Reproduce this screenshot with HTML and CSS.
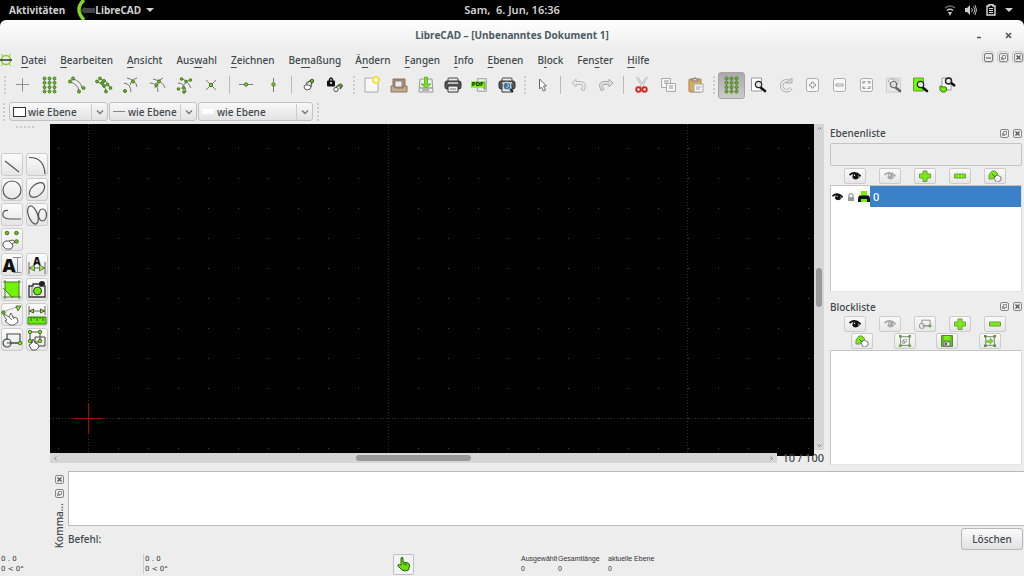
FILE: index.html
```html
<!DOCTYPE html>
<html lang="de">
<head>
<meta charset="utf-8">
<title>LibreCAD – [Unbenanntes Dokument 1]</title>
<link rel="stylesheet" href="styles.css">
</head>
<body>
<svg class="sprite" aria-hidden="true">
  <defs>
    <symbol id="grid" viewBox="0 0 18 18"><path d="M3.500 2v14M8.500 2v14M13.500 2v14" stroke="#9a9a9a" stroke-width="1"/><g fill="#73b832" stroke="#3f7a12" stroke-width=".9"><circle cx="3.500" cy="2.500" r="1.500"/><circle cx="8.500" cy="2.500" r="1.500"/><circle cx="13.500" cy="2.500" r="1.500"/><circle cx="3.500" cy="6.800" r="1.500"/><circle cx="8.500" cy="6.800" r="1.500"/><circle cx="13.500" cy="6.800" r="1.500"/><circle cx="3.500" cy="11.200" r="1.500"/><circle cx="8.500" cy="11.200" r="1.500"/><circle cx="13.500" cy="11.200" r="1.500"/><circle cx="3.500" cy="15.500" r="1.500"/><circle cx="8.500" cy="15.500" r="1.500"/><circle cx="13.500" cy="15.500" r="1.500"/></g></symbol>
    <symbol id="eye" viewBox="0 0 14 10"><path d="M2 3.500Q7 0 12.500 5 8 10 4.500 6.500" fill="#fff" stroke="currentColor" stroke-width=".8"/><path d="M1.500 4Q7-.5 12.500 5" fill="none" stroke="currentColor" stroke-width="1.700"/><circle cx="7.500" cy="5.200" r="3" fill="currentColor"/><circle cx="6.500" cy="4.300" r=".7" fill="#fff"/></symbol>
    <symbol id="plus" viewBox="0 0 12 12"><path d="M4 1h4v3h3.500v4H8v3.500H4V8H.5V4H4Z" fill="#7aec0c" stroke="#6c9c4a"/></symbol>
    <symbol id="minus" viewBox="0 0 12 12"><path d="M.5 4h11v4H.5Z" fill="#7aec0c" stroke="#6c9c4a"/></symbol>
    <symbol id="edit" viewBox="0 0 14 12"><path d="M1 9V5l3-4h3l3 3-3 2-2 3Z" fill="#7aec0c" stroke="#6d9950"/><path d="M4 4l4 4" stroke="#397012"/><path d="M6 8l3-3 4 2v3l-3 2H8Z" fill="#fff" stroke="#777"/></symbol>
    <symbol id="lens" viewBox="0 0 18 18"><path d="M11 11l5 4" stroke="#111" stroke-width="2.600" stroke-linecap="round"/><circle cx="9.500" cy="8.500" r="3.200" fill="#dce5e8" stroke="#222" stroke-width="1.200"/></symbol>
    <symbol id="float" viewBox="0 0 9 9"><rect x=".5" y=".5" width="8" height="8" rx="1.500" fill="none" stroke="#888"/><path d="M3.500 2.500h3v3h-3ZM2.500 4v2.500H5" fill="none" stroke="#777" stroke-width=".8"/></symbol>
    <symbol id="close" viewBox="0 0 9 9"><rect x=".5" y=".5" width="8" height="8" rx="1.500" fill="none" stroke="#888"/><path d="M2.500 2.500l4 4M6.500 2.500l-4 4" stroke="#555" stroke-width="1.300"/></symbol>
    <symbol id="chevron" viewBox="0 0 8 8"><path d="M1 2.500l3 3 3-3" fill="none" stroke="#777" stroke-width="1.400"/></symbol>
    <symbol id="printer" viewBox="0 0 18 18"><rect x="4" y="2" width="10" height="5" rx="1" fill="#eee" stroke="#444"/><rect x="1" y="5" width="16" height="8" rx="2" fill="#555" stroke="#333"/><path d="M4 7h10" stroke="#ddd" stroke-width="1.500"/><path d="M4 10h10v6H4Z" fill="#eee" stroke="#333"/><path d="M6 13h6" stroke="#777"/></symbol>
    <symbol id="hand" viewBox="0 0 16 16"><path d="M5 9V2q1-1.500 2 0v4l5 1q2 1 1.500 3l-1 4q-3.500 2-6.500 0L2 10q-.5-2 1.500-1.500Z" stroke="currentColor"/><path d="M8 7v2M10 7.500v2" stroke="currentColor"/></symbol>
    <symbol id="block" viewBox="0 0 22 16"><path d="M6 8V2h13v9h-9" fill="none" stroke="currentColor" stroke-width="1.200"/><circle cx="6" cy="11" r="4" fill="none" stroke="currentColor" stroke-width="1.200"/><path d="M6 11h13" stroke="currentColor"/><circle cx="19" cy="11" r="1.800" fill="#7aec0c" stroke="#477c1d"/></symbol>
    <pattern id="points" x="-7" y="10" width="30" height="30" patternUnits="userSpaceOnUse"><rect x="15" y="14" width="1" height="1" fill="#444"/></pattern>
  </defs>
</svg>

<header class="topbar">
  <div class="topbar-left">
    <a href="#" class="activities">Aktivitäten</a>
    <svg class="app-mark" viewBox="0 0 18 20" aria-hidden="true"><path d="M7 0Q-3 9 7 20" fill="none" stroke="#83d81c" stroke-width="3.500"/><path d="M3 10l5-3v1h10v5H8v1Z" fill="#444"/></svg>
    <button class="app-menu">LibreCAD<span class="caret"></span></button>
  </div>
  <time class="clock" datetime="16:36">Sam,&nbsp; 6. Jun, 16:36</time>
  <div class="tray">
    <svg width="12" height="12" viewBox="0 0 12 12" role="img" aria-label="WLAN"><g fill="none" stroke="#ccc" stroke-width="1.500"><path d="M1 4q5-4 10 0" opacity=".5"/><path d="M3 6.500q3-2.500 6 0"/></g><path d="M4 8h4l-2 4Z" fill="#ccc"/></svg>
    <svg width="12" height="12" viewBox="0 0 12 12" role="img" aria-label="Lautstärke"><path d="M0 4h2l3-3v10L2 8H0Z" fill="#ccc"/><path d="M6.500 4q2 2 0 4M8.500 2.500q3 3.500 0 7M10 1q3 5 0 10" fill="none" stroke="#bbb"/></svg>
    <svg width="10" height="12" viewBox="0 0 10 12" role="img" aria-label="Akku"><path d="M1 2h2V.7h4V2h2v9H1Z" fill="none" stroke="#ddd" stroke-width="1.400"/><path d="M3 4.500h4M3 6.500h4M3 8.500h4" stroke="#ddd"/></svg>
    <span class="caret"></span>
  </div>
</header>

<div class="window">
  <div class="titlebar">
    <h1>LibreCAD – [Unbenanntes Dokument 1]</h1>
    <div class="window-buttons">
      <button aria-label="Minimieren"><svg width="7" height="7" viewBox="0 0 7 7"><path d="M1 5.500h4" stroke="#4b5960" stroke-width="1.500"/></svg></button>
      <button aria-label="Schließen"><svg width="7" height="7" viewBox="0 0 7 7"><path d="M1 1l5 5M6 1L1 6" stroke="#4b5960" stroke-width="1.700"/></svg></button>
    </div>
  </div>

  <div class="menubar">
    <svg class="doc-icon" viewBox="0 0 13 14" aria-hidden="true"><circle cx="6" cy="7" r="4.500" fill="none" stroke="#8acb38" stroke-width="1.600"/><path d="M1 1l2 2M11 1L9 3M1 13l2-2M11 13l-2-2" stroke="#8acb38"/><path d="M0 7h12" stroke="#333" stroke-width="1.500"/></svg>
    <nav class="menu">
      <a href="#"><u>D</u>atei</a><a href="#"><u>B</u>earbeiten</a><a href="#"><u>A</u>nsicht</a><a href="#">Aus<u>w</u>ahl</a><a href="#"><u>Z</u>eichnen</a><a href="#">Be<u>m</u>aßung</a><a href="#">Ä<u>n</u>dern</a><a href="#"><u>F</u>angen</a><a href="#"><u>I</u>nfo</a><a href="#"><u>E</u>benen</a><a href="#">B<u>l</u>ock</a><a href="#">Fen<u>s</u>ter</a><a href="#"><u>H</u>ilfe</a>
    </nav>
    <div class="doc-buttons">
      <button aria-label="Dokument minimieren"><svg viewBox="0 0 9 9"><rect x=".5" y=".5" width="8" height="8" rx="1.500" fill="none" stroke="#777"/><path d="M2 5h5" stroke="#555"/></svg></button>
      <button aria-label="Dokument wiederherstellen"><svg><use href="#float"/></svg></button>
      <button aria-label="Dokument schließen"><svg><use href="#close"/></svg></button>
    </div>
  </div>

  <div class="toolbars">
    <div class="toolbar snap">
      <span class="grip"></span>
      <button aria-label="Freies Fangen"><svg viewBox="0 0 18 18"><path d="M8.500 2.500v13M2 8.500h13" stroke="#909090"/></svg></button>
      <button aria-label="Rasterfang"><svg><use href="#grid"/></svg></button>
      <button aria-label="Endpunkte"><svg viewBox="0 0 18 18"><path d="M2 6Q10 8 11 15M5 3q8 2 9 9" fill="none" stroke="#777"/><g fill="#73b832" stroke="#3f7a12"><circle cx="2" cy="5.500" r="1.500"/><circle cx="5" cy="2.500" r="1.500"/><circle cx="11" cy="15.500" r="1.500"/><circle cx="15.500" cy="12" r="1.500"/></g></svg></button>
      <button aria-label="Auf Objekt"><svg viewBox="0 0 18 18"><path d="M2 6Q10 8 11 15M5 3q8 2 10 9" fill="none" stroke="#777"/><g fill="#73b832" stroke="#3f7a12"><circle cx="2" cy="5.500" r="1.400"/><circle cx="5" cy="2.500" r="1.400"/><circle cx="7" cy="7" r="1.400"/><circle cx="9" cy="5" r="1.400"/><circle cx="9" cy="10" r="1.400"/><circle cx="12.500" cy="8.500" r="1.400"/><circle cx="11" cy="15.500" r="1.400"/><circle cx="15.500" cy="12" r="1.400"/></g></svg></button>
      <button aria-label="Zentrum"><svg viewBox="0 0 18 18"><path d="M2 7Q9 8 9 16M5 2q9 2 10 9M15 2q-6 2-7 7" fill="none" stroke="#777"/><g fill="#73b832" stroke="#3f7a12"><circle cx="11" cy="5.500" r="1.500"/><circle cx="3" cy="15" r="1.500"/></g></svg></button>
      <button aria-label="Mittelpunkt"><svg viewBox="0 0 18 18"><path d="M1 7q8 0 8 9M4 3q10 2 12 9M14 2Q6 6 6 12" fill="none" stroke="#777"/><g fill="#73b832" stroke="#3f7a12"><circle cx="10" cy="5.500" r="1.500"/><circle cx="7.500" cy="9" r="1.500"/></g></svg></button>
      <button aria-label="Abstand"><svg viewBox="0 0 18 18"><path d="M2 7q7 0 8 9M7 3q5 2 8 9M14 4q-6 2-8 9" fill="none" stroke="#777"/><g fill="#73b832" stroke="#3f7a12"><circle cx="5.500" cy="3" r="1.300"/><circle cx="10" cy="5.500" r="1.300"/><circle cx="14.500" cy="4" r="1.300"/><circle cx="2.500" cy="13" r="1.300"/><circle cx="7.500" cy="12" r="1.300"/><circle cx="8" cy="16" r="1.300"/></g></svg></button>
      <button aria-label="Schnittpunkt"><svg viewBox="0 0 18 18"><path d="M3 4l10 10M13 4L3 14" stroke="#777"/><circle cx="8" cy="9" r="1.700" fill="#8bcb40" stroke="#3f7a12"/></svg></button>
      <span class="sep"></span>
      <button aria-label="Horizontal einschränken"><svg viewBox="0 0 18 18"><path d="M1 8.500h14" stroke="#777"/><circle cx="8" cy="8.500" r="1.700" fill="#8bcb40" stroke="#3f7a12"/></svg></button>
      <button aria-label="Vertikal einschränken"><svg viewBox="0 0 18 18"><path d="M8.500 2v14" stroke="#777"/><circle cx="8.500" cy="8.500" r="1.700" fill="#8bcb40" stroke="#3f7a12"/></svg></button>
      <span class="sep"></span>
      <button aria-label="Relativer Nullpunkt"><svg viewBox="0 0 18 18"><path d="M6 8l2-2 4-2M12 5l-1 6" fill="none" stroke="#666" stroke-width="1.500"/><circle cx="12" cy="5" r="1.700" fill="#73b832" stroke="#345e12"/><path d="M5 9h4l2 2-1 2-3 1-2-1-1-2Z" fill="#fff" stroke="#555"/></svg></button>
      <button aria-label="Nullpunkt sperren"><svg viewBox="0 0 18 18"><path d="M2.500 5V3.500q1.500-3 3 0V5" fill="none" stroke="#111" stroke-width="1.500"/><rect x="0" y="4.500" width="8" height="6" rx="1" fill="#111"/><circle cx="4" cy="7" r="1" fill="#fff"/><path d="M9 11l3-2 3 1-2 3" fill="none" stroke="#555" stroke-width="1.500"/><circle cx="13.500" cy="9.500" r="1.600" fill="#73b832" stroke="#345e12"/><circle cx="9" cy="13.500" r="2.200" fill="#fff" stroke="#555"/></svg></button>
    </div>
    <div class="toolbar">
      <span class="grip"></span>
      <button aria-label="Neu"><svg viewBox="0 0 18 18"><path d="M2 2h13v14H2Z" fill="#f7f7f7" stroke="#aaa"/><circle cx="13" cy="4" r="3" fill="#fffce0" stroke="#f2df45" stroke-width="2"/></svg></button>
      <button aria-label="Öffnen"><svg viewBox="0 0 18 18"><path d="M3 3h12v10H3Z" fill="#ab8c6c" stroke="#8c7158"/><path d="M5 5h7v6H5Z" fill="#eee" stroke="#888"/><path d="M1 10h3l1 2h8l1-2h3v6H1Z" fill="#c4ab90" stroke="#8e7660"/></svg></button>
      <button aria-label="Speichern"><svg viewBox="0 0 18 18"><path d="M3 3h12l1 13H2Z" fill="#eee" stroke="#999"/><path d="M3 12h12M5 14h7" stroke="#777"/><path d="M7.500 1h3v7H14l-5 4-5-4h3.500Z" fill="#75e51b" stroke="#579d25" stroke-width=".7"/></svg></button>
      <button aria-label="Drucken"><svg><use href="#printer"/></svg></button>
      <button aria-label="PDF exportieren"><svg class="pdf" viewBox="0 0 20 18"><path d="M7 2h10v14H7Z" fill="#e8e8e8" stroke="#999"/><path d="M14 5h2v9h-2Z" fill="#5ca92d"/><path d="M0 5h15v7H0Z" fill="#78ed0e"/><text x="7.500" y="10.500" text-anchor="middle">PDF</text></svg></button>
      <button aria-label="Druckvorschau"><svg viewBox="0 0 18 18"><use href="#printer"/><circle cx="9" cy="10" r="4" fill="#3a76a5" stroke="#ddd"/><path d="M9 7l2 3-3 2" fill="none" stroke="#a7d0ea"/><path d="M12 13l3 3" stroke="#222" stroke-width="2"/></svg></button>
    </div>
    <div class="toolbar">
      <span class="grip"></span>
      <button aria-label="Auswahlzeiger"><svg viewBox="0 0 18 18"><path d="M5.500 3v10l2-2 2 4 2-1-2-4h3Z" fill="#fff" stroke="#666"/></svg></button>
      <span class="sep"></span>
      <button aria-label="Rückgängig" disabled><svg viewBox="0 0 18 18"><path d="M6 3L2 7l4 4V8.500h5q3 1 0 5l3 1q4-8-3-9H6Z" fill="#e9e9e9" stroke="#b7b7b7"/></svg></button>
      <button aria-label="Wiederholen" disabled><svg viewBox="0 0 18 18"><path d="M12 3l4 4-4 4V8.500H7q-3 1 0 5l-3 1Q0 6 7 5.500h5Z" fill="#dedede" stroke="#aaa"/></svg></button>
      <span class="sep"></span>
      <button aria-label="Ausschneiden"><svg viewBox="0 0 18 18"><path d="M4 1l7 11M14 1L7 12" stroke="#aaa" stroke-width="2.200"/><path d="M4 1l7 11M14 1L7 12" stroke="#eee"/><g fill="#fff" stroke="#d92525" stroke-width="2"><circle cx="5.500" cy="13.500" r="2.200"/><circle cx="11.500" cy="13.500" r="2.200"/></g></svg></button>
      <button aria-label="Kopieren"><svg viewBox="0 0 18 18"><path d="M1.500 2.500h9v9h-9Z" fill="#f5f5f5" stroke="#aaa"/><path d="M6.500 7.500h9v8h-9Z" fill="#f5f5f5" stroke="#aaa"/><path d="M4 5h5M4 7h4M9 10h4M9 12h4" stroke="#999"/></svg></button>
      <button aria-label="Einfügen"><svg viewBox="0 0 18 18"><rect x="2" y="3" width="12" height="13" rx="1" fill="#d6aa61" stroke="#aa8143"/><path d="M5 5V3h2q1-3 2 0h2v2Z" fill="#ddd" stroke="#777"/><path d="M7 8h9v8H7Z" fill="#f2f2f2" stroke="#aaa"/><path d="M9 11h5M9 13h4" stroke="#aaa"/></svg></button>
    </div>
    <div class="toolbar">
      <span class="grip"></span>
      <button class="pressed" aria-label="Raster" aria-pressed="true"><svg><use href="#grid"/></svg></button>
      <button aria-label="Neu zeichnen"><svg viewBox="0 0 18 18"><path d="M1.500 2h10v13h-10Z" fill="#fff" stroke="#999"/><use href="#lens" x="-1"/></svg></button>
      <button aria-label="Ansicht erneuern"><svg viewBox="0 0 18 18"><path d="M13 6A5 5 0 1 0 14 12" fill="none" stroke="#aaa" stroke-width="3.500"/><path d="M13 6A5 5 0 1 0 14 12" fill="none" stroke="#eee" stroke-width="1.800"/><path d="M9 7h6V2Z" fill="#ddd" stroke="#aaa"/></svg></button>
      <button aria-label="Vergrößern"><svg viewBox="0 0 18 18"><rect x="2.500" y="2.500" width="12" height="13" rx="2" fill="#f8f8f8" stroke="#aaa"/><path d="M7.500 6h2v2h2v2h-2v2h-2v-2h-2V8h2Z" fill="#fff" stroke="#888" stroke-width=".8"/></svg></button>
      <button aria-label="Verkleinern"><svg viewBox="0 0 18 18"><rect x="2.500" y="2.500" width="12" height="13" rx="2" fill="#f8f8f8" stroke="#aaa"/><path d="M5 8h7v2H5Z" fill="#fff" stroke="#888" stroke-width=".8"/></svg></button>
      <button aria-label="Automatischer Zoom"><svg viewBox="0 0 18 18"><rect x="2.500" y="2.500" width="12" height="13" rx="2" fill="#f8f8f8" stroke="#aaa"/><path d="M5 8V5.500h2.500M9.500 5.500H12V8M12 10v2.500H9.500M7.500 12.500H5V10M5.500 6L7 7.500M11.500 6L10 7.500M5.500 12L7 10.500M11.500 12L10 10.500" fill="none" stroke="#999"/></svg></button>
      <button aria-label="Vorherige Ansicht" disabled><svg viewBox="0 0 18 18"><path d="M1.500 2h14v14h-14Z" fill="#e8e8e8" stroke="#ccc"/><path d="M3 5l5-3v2h5v4H8v2Z" fill="#fff" stroke="#aaa"/><g opacity=".6"><use href="#lens" x="-1"/></g></svg></button>
      <button aria-label="Fensterzoom"><svg viewBox="0 0 18 18"><path d="M1.500 2h10v13h-10Z" fill="#72fb00" stroke="#6b9c3e"/><use href="#lens" x="-1"/></svg></button>
      <button aria-label="Ansicht verschieben"><svg viewBox="0 0 18 18"><path d="M3 2h9v12H3Z" fill="#fff" stroke="#999"/><path d="M11 6l5 4" stroke="#111" stroke-width="2.500"/><circle cx="9.500" cy="5" r="3" fill="#eee" stroke="#222" stroke-width="1.500"/><path d="M1 10l3 1 3 0 1 3-2 2H3l-2-2Z" fill="#6ee811" stroke="#39780d"/></svg></button>
    </div>
  </div>

  <div class="pens">
    <span class="grip"></span>
    <label class="combo combo-color"><svg width="14" height="12" viewBox="0 0 14 12" aria-hidden="true"><rect x=".5" y="1.500" width="12" height="9" fill="#fff" stroke="#333"/></svg><select aria-label="Farbe"><option>wie Ebene</option></select><span class="drop"><svg><use href="#chevron"/></svg></span></label>
    <label class="combo combo-width"><svg width="14" height="12" viewBox="0 0 14 12" aria-hidden="true"><path d="M0 5.500h12" stroke="#888"/></svg><select aria-label="Linienstärke"><option>wie Ebene</option></select><span class="drop"><svg><use href="#chevron"/></svg></span></label>
    <label class="combo combo-type"><svg width="14" height="12" viewBox="0 0 14 12" aria-hidden="true"><path d="M0 3h12v5H0Z" fill="#fff"/></svg><select aria-label="Linientyp"><option>wie Ebene</option></select><span class="drop"><svg><use href="#chevron"/></svg></span></label>
    <span class="grip"></span>
  </div>

  <div class="workspace">
    <aside class="palette-column">
      <span class="palette-grip"></span>
      <div class="palette">
        <button aria-label="Linien"><svg viewBox="0 0 22 22"><path d="M4 7l14 11" stroke="#555" stroke-width="1.200"/></svg></button>
        <button aria-label="Bögen"><svg viewBox="0 0 22 22"><path d="M3 3.500Q18 3 19 20" fill="none" stroke="#555" stroke-width="1.200"/></svg></button>
        <button aria-label="Kreise"><svg viewBox="0 0 22 22"><circle cx="11" cy="11" r="9" fill="none" stroke="#555" stroke-width="1.200"/></svg></button>
        <button aria-label="Ellipsen"><svg viewBox="0 0 22 22"><ellipse cx="11" cy="11" rx="9" ry="5.500" transform="rotate(-42 11 11)" fill="none" stroke="#555" stroke-width="1.200"/></svg></button>
        <button aria-label="Splines"><svg viewBox="0 0 22 22"><path d="M7 6.500Q1 6 2 12q2 3 7 3h11" fill="none" stroke="#555" stroke-width="1.200"/></svg></button>
        <button aria-label="Polylinien"><svg viewBox="0 0 22 22"><ellipse cx="7" cy="11" rx="4.500" ry="9.500" transform="rotate(-20 7 11)" fill="none" stroke="#555" stroke-width="1.200"/><ellipse cx="16.500" cy="11" rx="4" ry="6" fill="none" stroke="#555" stroke-width="1.200"/></svg></button>
        <button class="single" aria-label="Punkte"><svg viewBox="0 0 22 22"><g fill="#73b832" stroke="#3f7a12"><circle cx="6" cy="4" r="1.800"/><circle cx="15.500" cy="4" r="1.800"/><circle cx="15.500" cy="12.500" r="1.800"/></g><path d="M2 14l3-2h3l4-1 2 2-3 2 1 2-2 3H5l-3-3Z" fill="#fff" stroke="#555"/><path d="M8 12l3 3" stroke="#555"/></svg></button>
        <button aria-label="Text"><svg class="letter" viewBox="0 0 22 22"><text x="8" y="17.500" text-anchor="middle">A</text><path d="M12 3.500h8M16.500 3v15M12 18.500h8" stroke="#888"/></svg></button>
        <button aria-label="Bemaßung"><svg class="letter-small" viewBox="0 0 22 22"><path d="M3 8v12M19 8v12M3 14h16" stroke="#666"/><text x="11" y="11" text-anchor="middle">A</text><path d="M3.500 14l5-3v6ZM18.500 14l-5-3v6Z" fill="#a2df54" stroke="#44682b" stroke-width=".8"/></svg></button>
        <button aria-label="Schraffur"><svg viewBox="0 0 22 22"><path d="M4 3h14v15h-8L4 11Z" fill="#72f408"/><path d="M2 3h18M2 18h18M4 1v19M18 1v19M2 9l10 10" stroke="#387014" stroke-width=".9" fill="none"/></svg></button>
        <button aria-label="Bild"><svg viewBox="0 0 22 22"><path d="M3 7h4V5h7v2h5v11H3Z" fill="#eee" stroke="#333" stroke-width="1.300"/><path d="M6 7v11" stroke="#777"/><ellipse cx="16" cy="4.500" rx="3" ry="2.500" fill="#222"/><circle cx="11.500" cy="12" r="4" fill="#68e90b" stroke="#333"/></svg></button>
        <button aria-label="Ändern"><svg viewBox="0 0 22 22"><path d="M2 8l14-5" stroke="#888" stroke-dasharray="2 1"/><circle cx="2.500" cy="8.500" r="1.700" fill="#73b832" stroke="#3f7a12"/><path d="M15 2h5l-3 5Z" fill="#9edc52" stroke="#477522"/><path d="M3 10l5 3 2-4 2 4 4 1 1 4-4 3H9l-5-4 2-1-3-4Z" fill="#fff" stroke="#666"/><path d="M8 13l3 3M11 12l2 3" stroke="#777"/></svg></button>
        <button aria-label="Messen"><svg viewBox="0 0 22 22"><path d="M3 2v9M19 2v9M3 7h16" stroke="#666"/><path d="M3.500 7l4-2v4ZM18.500 7l-4-2v4Z" fill="#a2df54" stroke="#44682b"/><path d="M2 13h18v7H2Z" fill="#69e90d" stroke="#34810b"/><path d="M5 13v4M8 13v2M11 13v4M14 13v2M17 13v4" stroke="#286010"/></svg></button>
        <button aria-label="Block"><svg viewBox="0 0 22 22"><use href="#block" y="3" width="22" height="16"/></svg></button>
        <button aria-label="Auswahl"><svg viewBox="0 0 22 22"><path d="M4 3h10v10H4ZM9 8h10v9H9Z" fill="none" stroke="#444"/><g fill="#8adc35" stroke="#3f7a12"><circle cx="4" cy="3" r="1.700"/><circle cx="14" cy="3" r="1.700"/><circle cx="4" cy="12" r="1.700"/><circle cx="14" cy="12" r="1.700"/></g><path d="M6 14l1-4 2 4 3 1 1 3-3 3H6l-3-5Z" fill="#fff" stroke="#555"/></svg></button>
      </div>
    </aside>

    <div class="center">
      <div class="views">
        <main class="viewport">
          <svg class="drawing" role="img" aria-label="Zeichenfläche">
            <rect width="100%" height="100%" fill="#000"/>
            <rect width="100%" height="100%" fill="url(#points)"/>
            <g stroke="#303030" stroke-dasharray="1 2"><path d="M38.500 0v2000M338.500 0v2000M637.500 0v2000M937.500 0v2000"/><path d="M0 294.500h4000"/></g>
            <path d="M23 294.500h30M38.500 279v31" stroke="#a80505"/>
          </svg>
          <div class="scroll-v"><svg class="up"><use href="#chevron"/></svg><i></i><svg><use href="#chevron"/></svg></div>
          <div class="bottom-row">
            <div class="scroll-h"><svg class="left"><use href="#chevron"/></svg><i></i><svg class="right"><use href="#chevron"/></svg></div>
            <output class="scale">10 / 100</output>
          </div>
        </main>

        <aside class="docks">
          <section class="dock">
            <header class="dock-title"><h2>Ebenenliste</h2><button aria-label="Ablösen"><svg><use href="#float"/></svg></button><button aria-label="Schließen"><svg><use href="#close"/></svg></button></header>
            <input class="filter" type="text" aria-label="Ebenen filtern">
            <div class="actions">
              <button aria-label="Alle anzeigen"><svg><use href="#eye"/></svg></button>
              <button class="muted" aria-label="Alle verbergen"><svg><use href="#eye"/></svg></button>
              <button aria-label="Ebene hinzufügen"><svg><use href="#plus"/></svg></button>
              <button aria-label="Ebene entfernen"><svg><use href="#minus"/></svg></button>
              <button aria-label="Ebene bearbeiten"><svg><use href="#edit"/></svg></button>
            </div>
            <div class="list">
              <table class="layers">
                <tr>
                  <td class="flag"><svg width="13" height="10" role="img" aria-label="Sichtbar"><use href="#eye"/></svg></td>
                  <td class="flag"><svg width="8" height="10" viewBox="0 0 8 10" role="img" aria-label="Nicht gesperrt"><path d="M2 5V3q2-3 4 0v2" fill="none" stroke="#aaa" stroke-width="1.500"/><path d="M1 5h6v4H1Z" fill="#999"/></svg></td>
                  <td class="flag"><svg width="12" height="14" viewBox="0 0 12 14" role="img" aria-label="Druckbar"><path d="M3 1h6v6H3Z" fill="#77f009"/><path d="M1.500 5.500h9q1.500 1 1.500 3V12H0V8.500q0-2 1.500-3Z" fill="#111"/><path d="M3 9h6v3H3Z" fill="#77f009"/></svg></td>
                  <td class="name">0</td>
                </tr>
              </table>
            </div>
          </section>
          <section class="dock">
            <header class="dock-title"><h2>Blockliste</h2><button aria-label="Ablösen"><svg><use href="#float"/></svg></button><button aria-label="Schließen"><svg><use href="#close"/></svg></button></header>
            <div class="actions">
              <button aria-label="Alle anzeigen"><svg><use href="#eye"/></svg></button>
              <button class="muted" aria-label="Alle verbergen"><svg><use href="#eye"/></svg></button>
              <button class="soft" aria-label="Block erstellen"><svg><use href="#block"/></svg></button>
              <button aria-label="Block hinzufügen"><svg><use href="#plus"/></svg></button>
              <button aria-label="Block entfernen"><svg><use href="#minus"/></svg></button>
            </div>
            <div class="actions actions-four">
              <button aria-label="Block umbenennen"><svg><use href="#edit"/></svg></button>
              <button aria-label="Block bearbeiten"><svg viewBox="0 0 14 14"><path d="M2 2h10v10H2Z" fill="#fff" stroke="#666"/><path d="M5 8V5h4v3H6" fill="none" stroke="#999"/><circle cx="5.500" cy="8.500" r="1.500" fill="none" stroke="#777"/><path d="M0 0h3v3H0ZM11 0h3v3h-3ZM0 11h3v3H0ZM11 11h3v3h-3Z" fill="#67a72e"/></svg></button>
              <button aria-label="Block speichern"><svg viewBox="0 0 12 12"><path d="M.5.500h11v11H.5Z" fill="#66ba29" stroke="#5d8245"/><path d="M3 1h6v4H3Z" fill="#78ef12"/><path d="M3 7h6v4H3Z" fill="#eee" stroke="#777"/><path d="M4 8h2v2H4Z" fill="#555"/></svg></button>
              <button aria-label="Block einfügen"><svg viewBox="0 0 14 14"><path d="M2 2h10v10H2Z" fill="#fff" stroke="#666"/><path d="M3 6h4V3l4 4-4 4V9H3Z" fill="#74d925" stroke="#72934d" stroke-width=".5"/><path d="M0 0h3v3H0ZM11 0h3v3h-3ZM0 11h3v3H0ZM11 11h3v3h-3Z" fill="#5d9432"/></svg></button>
            </div>
            <div class="list"></div>
          </section>
        </aside>
      </div>

      <section class="command">
        <div class="command-title">
          <button aria-label="Schließen"><svg><use href="#close"/></svg></button>
          <button aria-label="Ablösen"><svg><use href="#float"/></svg></button>
          <h2>Komma...</h2>
        </div>
        <div class="command-body">
          <textarea aria-label="Befehlsverlauf" readonly></textarea>
          <div class="command-line"><label for="befehl">Befehl:</label><input id="befehl" type="text"><button>Löschen</button></div>
        </div>
      </section>
    </div>
  </div>

  <footer class="status">
    <div class="coords">0 . 0<br>0 &lt; 0°</div>
    <div class="coords relative">0 . 0<br>0 &lt; 0°</div>
    <button aria-label="Mausaktion"><svg><use href="#hand"/></svg></button>
    <dl class="facts">
      <div class="fact-selected"><dt>Ausgewählt</dt><dd>0</dd></div>
      <div class="fact-length"><dt>Gesamtlänge</dt><dd>0</dd></div>
      <div><dt>aktuelle Ebene</dt><dd>0</dd></div>
    </dl>
  </footer>
</div>
</body>
</html>
```
FILE: styles.css
```css
* { box-sizing: border-box; }
body {
  margin: 0;
  min-height: 100vh;
  display: flex;
  flex-direction: column;
  background: #000;
  color: #3f484b;
  font: 500 10px/16px "Noto Sans", Lato, sans-serif;
}
button, input, select, textarea { font: inherit; color: inherit; margin: 0; padding: 0; border: 0; background: none; }
button { display: flex; align-items: center; justify-content: center; }
svg { display: block; flex: none; }
h1, h2, dl, dd { margin: 0; font-size: inherit; }
a { color: inherit; text-decoration: none; }
.sprite { position: absolute; width: 0; height: 0; }

.topbar {
  display: grid;
  grid-template-columns: 1fr auto 1fr;
  align-items: center;
  height: 20px;
  color: #d2d2d2;
  font-weight: 700;
}
.topbar-left { display: flex; align-items: center; padding-left: 9px; }
.clock { font-size: 11px; font-weight: 600; }
.app-mark { width: 18px; height: 20px; margin-left: 12px; }
.caret { border: 4px solid transparent; border-top-color: currentColor; border-bottom: 0; }
.app-menu .caret { margin-left: 5px; }
.tray { display: flex; justify-content: flex-end; align-items: center; gap: 9px; padding-right: 11px; }

.window {
  flex: 1;
  display: flex;
  flex-direction: column;
  background: linear-gradient(#fff, #ededed 30px);
  border-radius: 6px 6px 0 0;
}
.titlebar { display: grid; grid-template-columns: 1fr auto 1fr; align-items: center; height: 30px; color: #4b5c64; }
.titlebar h1 { grid-column: 2; font-weight: 700; }
.window-buttons { display: flex; justify-content: flex-end; gap: 22px; padding-right: 12px; }

.menubar { display: flex; align-items: center; height: 20px; }
.doc-icon { width: 13px; height: 14px; }
.menu { display: flex; gap: 14px; margin-left: 8px; }
.menu u { text-underline-offset: 3px; }
.doc-buttons { display: flex; gap: 3px; margin: 0 0 6px auto; }
.doc-buttons button { width: 12px; height: 12px; border: 1px solid #ccc; border-radius: 3px; }
.doc-buttons svg { width: 9px; height: 9px; }

.toolbars { display: flex; height: 30px; align-items: center; }
.toolbar { display: flex; align-items: center; }
.toolbar button { width: 27px; height: 27px; }
.toolbar svg { width: 18px; height: 18px; }
.toolbar .pressed { border: 1px solid #a5a5a5; border-radius: 3px; background: linear-gradient(#a8a8a8, #cdcdcd); }
.pdf text { font: 700 6px "DejaVu Sans", sans-serif; fill: #102900; }
.grip { width: 9px; height: 18px; background: radial-gradient(circle, #ccc 1px, transparent 1px) center / 4px 4px repeat-y; }
.sep { width: 9px; height: 18px; background: linear-gradient(#bbb, #bbb) center / 1px 100% no-repeat; }
.snap .sep { width: 8px; }

.pens { display: flex; height: 23px; margin-bottom: 1px; align-items: center; gap: 1px; }
.pens .grip { width: 8px; }
.combo { display: flex; align-items: center; height: 19px; padding-left: 3px; border: 1px solid #c2c2c2; border-radius: 3px; background: linear-gradient(#f8f8f8, #e3e3e3); }
.combo select { appearance: none; flex: 1; min-width: 0; margin-left: 1px; }
.combo-color { width: 99px; }
.combo-width { width: 88px; }
.combo-type { width: 115px; }
.drop { width: 16px; height: 16px; display: grid; place-items: center; border-left: 1px solid #ccc; }
.drop svg { width: 8px; height: 8px; }

.workspace { flex: 1; display: flex; min-height: 0; }
.palette-column { flex: none; width: 50px; }
.palette-grip { display: block; height: 6px; width: 20px; margin: 0 auto; background: radial-gradient(circle, #ccc 1px, transparent 1px) center / 4px 4px repeat-x; }
.palette { display: grid; grid-template-columns: 22px 22px; gap: 2px 3px; padding: 23px 1px 0; }
.palette button { height: 23px; border: 1px solid #ccc; border-radius: 3px; background: linear-gradient(#fcfcfc, #e5e5e5); }
.palette svg { width: 22px; height: 22px; }
.single, .single + button { grid-column: 1; }
.letter text { font: 800 18px "Open Sans", sans-serif; fill: #111; }
.letter-small text { font: 800 10px "Open Sans", sans-serif; fill: #111; }

.center { flex: 1; min-width: 0; display: flex; flex-direction: column; }
.views { flex: 1; display: flex; min-height: 0; }
.viewport { flex: 1; min-width: 0; display: grid; grid-template-columns: 1fr 10px; grid-template-rows: 1fr 10px; padding-bottom: 8px; }
.drawing { width: 100%; height: 100%; min-height: 200px; }
.scroll-v { display: flex; flex-direction: column; align-items: center; margin-bottom: 3px; padding: 2px 0; background: #d6d6d6; }
.scroll-v svg, .scroll-h svg { width: 5px; height: 5px; }
.scroll-v i { width: 6px; height: 39px; margin: auto 0; border-radius: 3px; background: #999b9b; }
.up { transform: rotate(180deg); }
.left { transform: rotate(90deg); }
.right { transform: rotate(-90deg); }
.bottom-row { grid-column: 1 / 3; display: flex; }
.scroll-h { flex: 1; display: flex; align-items: center; justify-content: space-between; padding: 0 3px; background: #d6d6d6; }
.scroll-h i { width: 16%; height: 6px; border-radius: 3px; background: #999b9b; }
.scale { width: 47px; font-size: 11px; line-height: 10px; text-align: right; white-space: nowrap; background: linear-gradient(#000, #000) 0 0 / 37px 3px no-repeat; }

.docks { flex: none; width: 200px; display: flex; flex-direction: column; gap: 6px; padding: 0 2px 6px 6px; }
.dock { flex: 1 1 0; display: flex; flex-direction: column; }
.dock-title { display: flex; align-items: center; gap: 4px; height: 18px; }
.dock-title h2, .command-title h2 { flex: 1; font-weight: 500; }
.dock-title svg, .command-title svg { width: 9px; height: 9px; }
.filter { height: 23px; margin: 1px 0 2px; border: 1px solid #c4c4c4; border-radius: 2px; background: #ececec; }
.actions { display: flex; justify-content: space-between; height: 17px; padding: 0 16px 0 14px; }
.actions button { width: 22px; height: 16px; border: 1px solid #ccc; border-radius: 2px; background: linear-gradient(#fafafa, #e6e6e6); color: #111; }
.actions svg { width: 14px; height: 12px; }
.actions .muted { color: #aaa; }
.actions .soft { color: #777; }
.actions-four { padding: 0 21px; }
.list { flex: 1; border: 1px solid #c4c4c4; border-right-color: #ddd; border-bottom-color: #e5e5e5; background: #fff; }
.layers { width: 100%; border-collapse: collapse; color: #111; }
.layers td { height: 21px; padding: 0; }
.layers .flag { width: 13px; }
.layers .flag svg { margin: auto; }
.layers .name { padding-left: 3px; background: #3a81ca; color: #fff; font-size: 11px; }

.command { display: flex; height: 81px; }
.command-title { width: 18px; display: flex; flex-direction: column; align-items: center; gap: 5px; padding: 4px 0; }
.command-title h2 { writing-mode: vertical-rl; transform: rotate(180deg); line-height: 12px; }
.command-body { flex: 1; display: flex; flex-direction: column; }
.command textarea { flex: 1; width: 100%; resize: none; border: 1px solid #b9b9b9; border-right: 0; background: #fff; }
.command-line { display: flex; align-items: center; height: 26px; }
.command-line input { flex: 1; min-width: 0; }
.command-line button { width: 62px; height: 22px; margin-right: 1px; border: 1px solid #b7b7b7; border-radius: 3px; background: linear-gradient(#fafafa, #e2e2e2); }

.status { display: flex; align-items: center; height: 24px; color: #333; font: 7px/10px "Liberation Sans", sans-serif; }
.coords { width: 143px; padding-left: 1px; font-family: "DejaVu Sans", sans-serif; }
.relative { width: 250px; border-left: 1px solid #ccc; }
.status button { width: 21px; height: 21px; border: 1px solid #c0c0c0; border-radius: 2px; background: #f3f3f3; }
.status button svg { width: 16px; height: 16px; fill: #65df0b; color: #2c6010; }
.facts { display: flex; margin-left: 107px; white-space: nowrap; }
.fact-selected { width: 37px; }
.fact-length { width: 50px; }
```
